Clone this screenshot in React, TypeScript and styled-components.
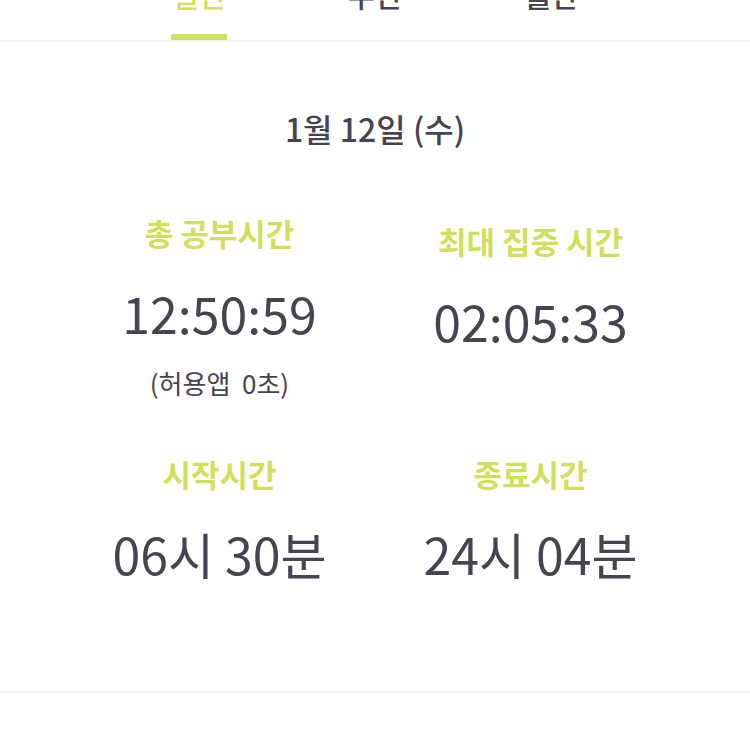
import React from 'react';
import styled, { createGlobalStyle } from 'styled-components';

const GlobalStyle = createGlobalStyle`
  html, body {
    margin: 0;
    padding: 0;
    background: #ffffff;
  }
  body {
    font-family: 'Noto Sans CJK KR', 'Noto Sans', sans-serif;
    color: #45444f;
  }
`;

const ACCENT = '#cfe05c';
const INK = '#45444f';

interface Stat {
  label: string;
  value: string;
  note?: string;
  drop?: number;
}

const tabs = ['일간', '주간', '월간'];

const rows: Stat[][] = [
  [
    { label: '총 공부시간', value: '12:50:59', note: '(허용앱  0초)' },
    { label: '최대 집중 시간', value: '02:05:33', drop: 8 },
  ],
  [
    { label: '시작시간', value: '06시 30분' },
    { label: '종료시간', value: '24시 04분' },
  ],
];

const App = () => {
  return (
    <>
      <GlobalStyle />
      <Page>
        <TabBar>
          {tabs.map((tab, i) => (
            <Tab key={tab}>
              <TabLabel $active={i === 0}>{tab}</TabLabel>
              <Indicator $active={i === 0} />
            </Tab>
          ))}
        </TabBar>
        <Summary>
          <DateTitle>1월 12일 (수)</DateTitle>
          <StatGrid>
            {rows.map((row) =>
              row.map((stat) => (
                <StatCell key={stat.label} $drop={stat.drop ?? 0}>
                  <StatLabel>{stat.label}</StatLabel>
                  <StatValue>{stat.value}</StatValue>
                  {stat.note && <StatNote>{stat.note}</StatNote>}
                </StatCell>
              ))
            )}
          </StatGrid>
        </Summary>
      </Page>
    </>
  );
};

export default App;

const Page = styled.div`
  width: 750px;
  min-height: 750px;
  overflow: hidden;
`;

const TabBar = styled.div`
  display: flex;
  justify-content: center;
  margin-top: -24px;
  border-bottom: 2px solid #f2f2f3;
`;

const Tab = styled.div`
  width: 176px;
  display: flex;
  flex-direction: column;
  align-items: center;
`;

const TabLabel = styled.span<{ $active: boolean }>`
  font-size: 30px;
  line-height: 36px;
  font-weight: 500;
  color: ${(p) => (p.$active ? ACCENT : INK)};
  padding-bottom: 22px;
`;

const Indicator = styled.div<{ $active: boolean }>`
  width: 56px;
  height: 6px;
  background: ${(p) => (p.$active ? ACCENT : 'transparent')};
`;

const Summary = styled.div`
  padding-top: 66px;
  padding-bottom: 108px;
  border-bottom: 2px solid #f2f2f3;
`;

const DateTitle = styled.div`
  text-align: center;
  font-size: 32px;
  line-height: 40px;
  font-weight: 500;
  color: ${INK};
`;

const StatGrid = styled.div`
  display: grid;
  grid-template-columns: 311px 311px;
  justify-content: center;
  align-items: start;
  row-gap: 59px;
  margin-top: 68px;
`;

const StatCell = styled.div<{ $drop: number }>`
  display: flex;
  flex-direction: column;
  align-items: center;
  padding-top: ${(p) => p.$drop}px;
`;

const StatLabel = styled.div`
  font-size: 31px;
  line-height: 34px;
  font-weight: 600;
  color: ${ACCENT};
`;

const StatValue = styled.div`
  margin-top: 32px;
  font-size: 50px;
  line-height: 60px;
  font-weight: 400;
  color: ${INK};
`;

const StatNote = styled.div`
  margin-top: 26px;
  font-size: 26px;
  line-height: 30px;
  font-weight: 400;
  color: ${INK};
  white-space: pre;
`;
